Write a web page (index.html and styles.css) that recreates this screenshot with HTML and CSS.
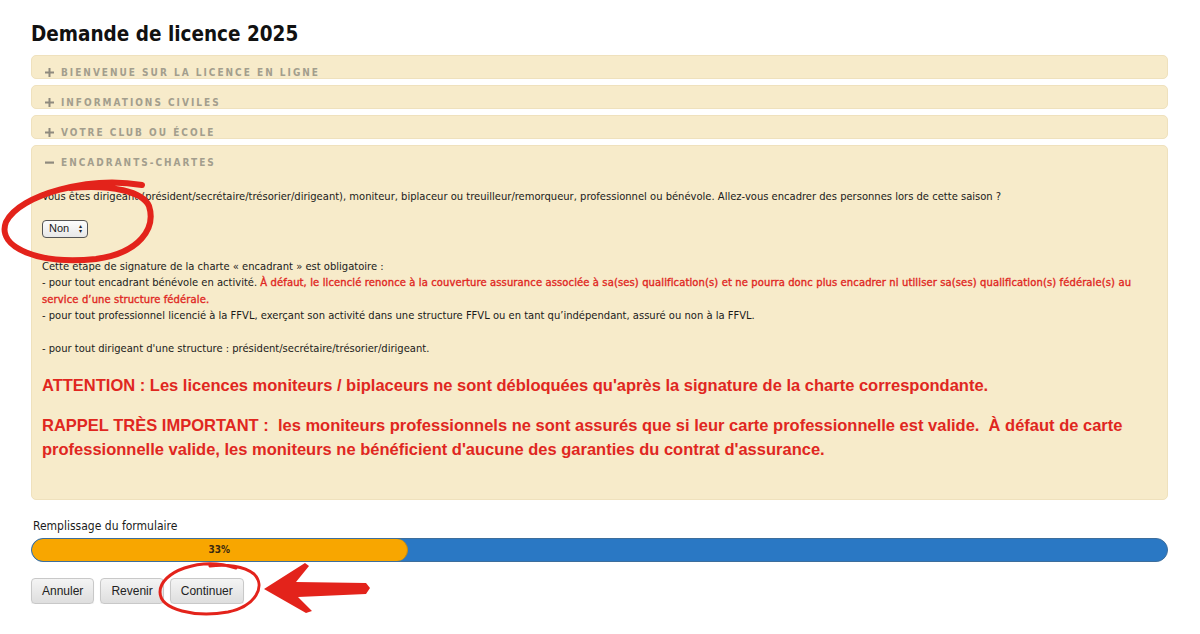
FILE: index.html
```html
<!DOCTYPE html>
<html lang="fr">
<head>
<meta charset="utf-8">
<title>Demande de licence 2025</title>
<link rel="stylesheet" href="styles.css">
</head>
<body>
<div class="page">
  <h1 class="title">Demande de licence 2025</h1>

  <div class="acc">
    <div class="acc-item"><div class="acc-head"><svg class="ico" width="9" height="9" viewBox="0 0 9 9"><rect x="0" y="3.5" width="9" height="2"/><rect x="3.5" y="0" width="2" height="9"/></svg>Bienvenue sur la licence en ligne</div></div>
    <div class="acc-item"><div class="acc-head"><svg class="ico" width="9" height="9" viewBox="0 0 9 9"><rect x="0" y="3.5" width="9" height="2"/><rect x="3.5" y="0" width="2" height="9"/></svg>Informations civiles</div></div>
    <div class="acc-item"><div class="acc-head"><svg class="ico" width="9" height="9" viewBox="0 0 9 9"><rect x="0" y="3.5" width="9" height="2"/><rect x="3.5" y="0" width="2" height="9"/></svg>Votre club ou école</div></div>
    <div class="acc-item open">
      <div class="acc-head"><svg class="ico" width="9" height="9" viewBox="0 0 9 9"><rect x="0" y="3.5" width="9" height="2.2"/></svg>Encadrants-chartes</div>
      <div class="acc-body">
        <p class="q">Vous êtes dirigeant (président/secrétaire/trésorier/dirigeant), moniteur, biplaceur ou treuilleur/remorqueur, professionnel ou bénévole. Allez-vous encadrer des personnes lors de cette saison ?</p>
        <div class="sel"><span>Non</span><span class="arrows">&#9652;<br>&#9662;</span></div>
        <p class="info">Cette étape de signature de la charte « encadrant » est obligatoire :<br>
- pour tout encadrant bénévole en activité. <strong class="red">À défaut, le licencié renonce à la couverture assurance associée à sa(ses) qualification(s) et ne pourra donc plus encadrer ni utiliser sa(ses) qualification(s) fédérale(s) au service d’une structure fédérale.</strong><br>
- pour tout professionnel licencié à la FFVL, exerçant son activité dans une structure FFVL ou en tant qu’indépendant, assuré ou non à la FFVL.<br>
<br>
- pour tout dirigeant d'une structure : président/secrétaire/trésorier/dirigeant.</p>
        <p class="warn">ATTENTION : Les licences moniteurs / biplaceurs ne sont débloquées qu'après la signature de la charte correspondante.</p>
        <p class="warn">RAPPEL TRÈS IMPORTANT :&nbsp; les moniteurs professionnels ne sont assurés que si leur carte professionnelle est valide.&nbsp; À défaut de carte professionnelle valide, les moniteurs ne bénéficient d'aucune des garanties du contrat d'assurance.</p>
      </div>
    </div>
  </div>

  <div class="progress-label">Remplissage du formulaire</div>
  <div class="progress"><div class="fill" style="width:33%">33%</div></div>

  <div class="buttons">
    <button class="btn">Annuler</button>
    <button class="btn">Revenir</button>
    <button class="btn">Continuer</button>
  </div>
</div>

<svg class="marks" width="1200" height="634" viewBox="0 0 1200 634">
  <g fill="none" stroke="#e3231b" stroke-linecap="round">
    <path d="M142 185 C 90 176, 20 194, 6 222 C -4 248, 40 265, 96 259 C 140 253, 156 228, 149 206 C 143 192, 112 184, 70 188" stroke-width="6"/>
    <path d="M236 568 C 200 556, 160 572, 160 592 C 160 610, 196 618, 228 612 C 256 606, 266 586, 254 574 C 244 566, 226 564, 210 566" stroke-width="3"/>
  </g>
  <path d="M264 589 L305 563 L309 566 L296 582 L366 583 L370 588 L366 594 L298 597 L312 611 L306 613 Z" fill="#e3231b"/>
</svg>
</body>
</html>
```

FILE: styles.css
```css
html, body {
  margin: 0;
  padding: 0;
  background: #ffffff;
}

body {
  font-family: "DejaVu Sans Condensed", "DejaVu Sans", sans-serif;
  color: #1b1b1b;
}

.page {
  padding: 21px 32px 0 31px;
}

.title {
  margin: 0 0 8px 0;
  font-size: 20.5px;
  line-height: 26px;
  font-weight: bold;
  color: #111;
}

.acc-item {
  background: #f7ebca;
  border: 1px solid #efe1bd;
  border-radius: 5px;
  margin-bottom: 6px;
}

.acc-head {
  height: 22px;
  box-sizing: border-box;
  padding: 11px 0 0 13px;
  font-size: 10px;
  line-height: 10px;
  font-weight: bold;
  letter-spacing: 2px;
  text-transform: uppercase;
  color: #a39e8d;
  display: flex;
  align-items: center;
}

.ico {
  fill: #8f8a7e;
  margin-right: 7px;
  flex: none;
}

.acc-body {
  padding: 18px 10px 38px 10px;
  font-size: 11.1px;
  line-height: 16.5px;
}

.q {
  margin: 3px 0 0 0;
}

.sel {
  margin-top: 14px;
  width: 46px;
  height: 18px;
  box-sizing: border-box;
  border: 1px solid #555;
  border-radius: 4px;
  background: linear-gradient(#fcfcfc, #e8e8e8);
  display: flex;
  align-items: center;
  justify-content: space-between;
  padding: 0 5px 0 6px;
  font-family: "Liberation Sans", Arial, sans-serif;
  font-size: 11px;
}

.arrows {
  font-size: 6px;
  line-height: 5px;
  color: #222;
}

.info {
  margin: 21px 0 0 0;
}

.red {
  color: #e0271f;
  font-weight: normal;
  letter-spacing: 0.12px;
  -webkit-text-stroke: 0.35px #e0271f;
}

.warn {
  margin: 15px 0 0 0;
  font-family: "Liberation Sans", Arial, sans-serif;
  font-weight: bold;
  font-size: 16.5px;
  line-height: 24px;
  color: #e0271f;
}

.warn + .warn {
  margin-top: 16px;
}

.progress-label {
  margin-top: 19px;
  font-size: 12px;
  line-height: 14px;
  padding-left: 2px;
}

.progress {
  margin-top: 5px;
  height: 24px;
  box-sizing: border-box;
  border: 1px solid #3d6e9c;
  border-radius: 12px;
  background: #2a78c4;
  overflow: hidden;
}

.fill {
  height: 100%;
  background: #f8a600;
  border-radius: 12px;
  border-right: 1px solid #c88a10;
  font-size: 10px;
  font-weight: bold;
  color: #3a2a10;
  display: flex;
  align-items: center;
  justify-content: center;
}

.buttons {
  margin-top: 16px;
  display: flex;
  gap: 6px;
}

.btn {
  height: 26px;
  padding: 0 10px;
  border: 1px solid #c8c8c8;
  border-radius: 4px;
  background: linear-gradient(#f4f4f4, #dedede);
  font-family: "Liberation Sans", Arial, sans-serif;
  font-size: 12px;
  color: #222;
  box-shadow: 0 1px 1px rgba(0,0,0,0.08);
}

.marks {
  position: absolute;
  left: 0;
  top: 0;
  pointer-events: none;
}
```
